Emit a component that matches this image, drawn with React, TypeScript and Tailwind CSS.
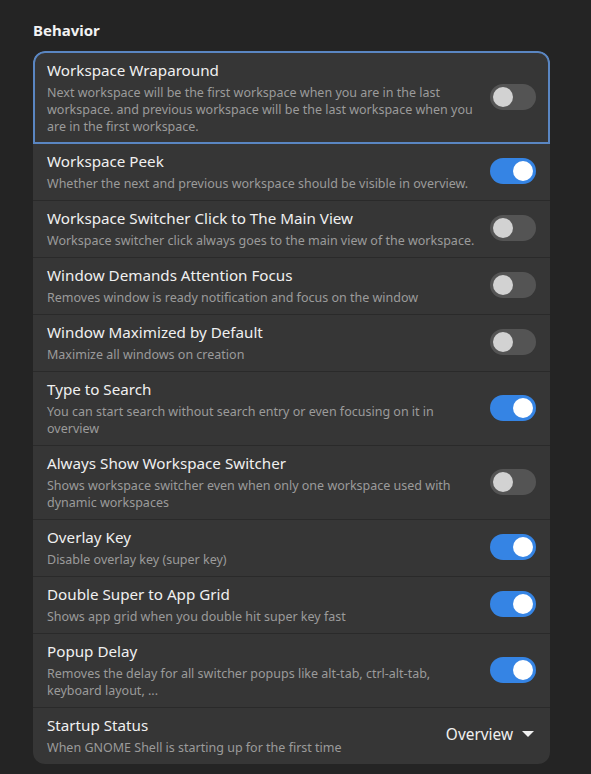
import React from "react";

type Row = {
    title: string;
    subtitle: string;
    on?: boolean;
    dropdown?: string;
};

const rows: Row[] = [
    {
        title: "Workspace Wraparound",
        subtitle:
            "Next workspace will be the first workspace when you are in the last workspace. and previous workspace will be the last workspace when you are in the first workspace.",
        on: false,
    },
    {
        title: "Workspace Peek",
        subtitle: "Whether the next and previous workspace should be visible in overview.",
        on: true,
    },
    {
        title: "Workspace Switcher Click to The Main View",
        subtitle: "Workspace switcher click always goes to the main view of the workspace.",
        on: false,
    },
    {
        title: "Window Demands Attention Focus",
        subtitle: "Removes window is ready notification and focus on the window",
        on: false,
    },
    {
        title: "Window Maximized by Default",
        subtitle: "Maximize all windows on creation",
        on: false,
    },
    {
        title: "Type to Search",
        subtitle: "You can start search without search entry or even focusing on it in overview",
        on: true,
    },
    {
        title: "Always Show Workspace Switcher",
        subtitle: "Shows workspace switcher even when only one workspace used with dynamic workspaces",
        on: false,
    },
    {
        title: "Overlay Key",
        subtitle: "Disable overlay key (super key)",
        on: true,
    },
    {
        title: "Double Super to App Grid",
        subtitle: "Shows app grid when you double hit super key fast",
        on: true,
    },
    {
        title: "Popup Delay",
        subtitle: "Removes the delay for all switcher popups like alt-tab, ctrl-alt-tab, keyboard layout, ...",
        on: true,
    },
    {
        title: "Startup Status",
        subtitle: "When GNOME Shell is starting up for the first time",
        dropdown: "Overview",
    },
];

function Switch({ on }: { on: boolean }) {
    return on ? (
        <div className="flex h-[26px] w-[46px] shrink-0 items-center justify-end rounded-full bg-[#3584e4] px-[3px]">
            <div className="h-[20px] w-[20px] rounded-full bg-white" />
        </div>
    ) : (
        <div className="flex h-[26px] w-[46px] shrink-0 items-center justify-start rounded-full bg-[#545454] px-[3px]">
            <div className="h-[20px] w-[20px] rounded-full bg-[#d2d2d2]" />
        </div>
    );
}

export default function App() {
    return (
        <div
            className="min-h-screen w-full bg-[#242424] px-[33px] pt-[19px] pb-[11px]"
            style={{ fontFamily: '"Noto Sans", "Open Sans", sans-serif' }}
        >
            <h2 className="mb-[10px] text-[15px] font-bold leading-[22px] text-[#f2f2f2]">Behavior</h2>
            <div className="w-[517px] overflow-hidden rounded-[12px] bg-[#363636]">
                {rows.map((row, i) => (
                    <div
                        key={row.title}
                        className={
                            i === 0
                                ? "flex items-center gap-3 rounded-t-[12px] border-[2px] border-[#5a86c2] pt-[6px] pb-[7px] px-[12px]"
                                : i === 1
                                  ? "flex items-center gap-3 pt-[6px] pb-[8px] px-[14px]"
                                  : "flex items-center gap-3 border-t border-[#2a2a2a] pt-[6px] pb-[8px] px-[14px]"
                        }
                    >
                        <div className="flex-1">
                            <div className="text-[15.2px] leading-[22px] text-[#f0f0f0]">{row.title}</div>
                            <div className="mt-[3px] text-[12.5px] leading-[17px] text-[#9b9b9b]">{row.subtitle}</div>
                        </div>
                        {row.dropdown ? (
                            <div className="flex items-center gap-[9px] pr-[2px] text-[15.4px] text-[#f0f0f0]">
                                <span>{row.dropdown}</span>
                                <svg width="12" height="7" viewBox="0 0 12 7">
                                    <path d="M0 0 L12 0 L6 6 Z" fill="#f0f0f0" />
                                </svg>
                            </div>
                        ) : (
                            <Switch on={!!row.on} />
                        )}
                    </div>
                ))}
            </div>
        </div>
    );
}
